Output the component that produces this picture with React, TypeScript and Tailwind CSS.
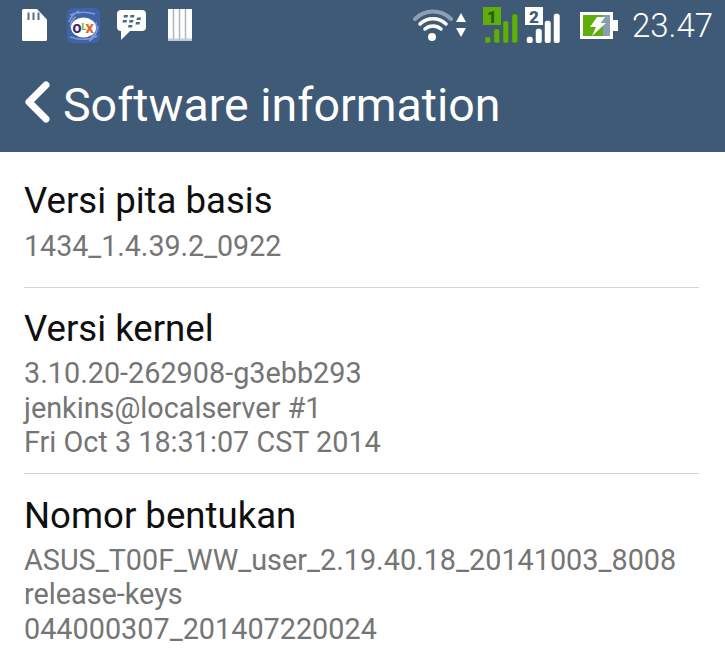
const rows = [
  { title: 'Versi pita basis', lines: ['1434_1.4.39.2_0922'] },
  { title: 'Versi kernel', lines: ['3.10.20-262908-g3ebb293', 'jenkins@localserver #1', 'Fri Oct 3 18:31:07 CST 2014'] },
  { title: 'Nomor bentukan', lines: ['ASUS_T00F_WW_user_2.19.40.18_20141003_8008', 'release-keys', '044000307_201407220024'] },
];

const rowSpacing = ['pt-[26px] pb-[24px]', 'border-t pt-[18px] pb-[13px]', 'border-t pt-[19px]'];

function SdIcon() {
  return (
    <svg width="25" height="32" viewBox="0 0 25 32">
      <path d="M1.500 0H15L25 10.500V30.500Q25 32 23.500 32H1.500Q0 32 0 30.500V1.500Q0 0 1.500 0Z" fill="#fff" />
      <path d="M5.500 3.500H7.500V11H5.500ZM10.500 3.500H12.500V11H10.500ZM15.500 3.500H17.500V11H15.500Z" fill="#54708c" />
    </svg>
  );
}

function OlxIcon() {
  return (
    <svg width="33" height="35" viewBox="0 0 33 35">
      <rect width="33" height="35" rx="6" fill="#3f63ab" />
      <path d="M3 7Q14 2 28 6M3 29Q18 34 30 28M2 14Q5 6 12 3M22 33Q30 28 31 18M4 20Q3 12 9 9M24 29Q30 24 29 14" stroke="#7f9ad2" strokeWidth="1.500" fill="none" />
      <ellipse cx="16.500" cy="19.500" rx="12.500" ry="10" fill="#fff" />
      <text x="5.500" y="24.500" fontFamily="Roboto" fontWeight="900" fontSize="13" fill="#3b2a7a">O</text>
      <text x="14.500" y="22" fontFamily="Roboto" fontWeight="900" fontSize="9" fill="#86b030">L</text>
      <text x="18.500" y="24.500" fontFamily="Roboto" fontWeight="900" fontSize="13" fill="#e4652c">X</text>
    </svg>
  );
}

function BbmIcon() {
  return (
    <svg width="29" height="30" viewBox="0 0 29 30">
      <path d="M4 0H25Q29 0 29 4V17Q29 21 25 21H13L4 30V21Q0 21 0 17V4Q0 0 4 0Z" fill="#fff" />
      <path d="M7 5H11L10.500 7.500H6.500ZM13.500 5H17.500L17 7.500H13ZM6 10H10L9.500 12.500H5.500ZM12.500 10H16.500L16 12.500H12ZM20 7.500H24L23.500 10H19.500ZM19 12H23L22.500 14.500H18.500ZM11.500 15H15.500L15 17.500H11Z" fill="#4c6886" />
    </svg>
  );
}

function BarsIcon() {
  return (
    <svg width="24" height="32" viewBox="0 0 24 32">
      <rect width="24" height="32" fill="#fff" />
      <path d="M5.500 0V30M11.500 0V30M17.500 0V30" stroke="#a8b5c2" strokeWidth="1.500" />
      <rect y="29.500" width="24" height="2.500" fill="#c3ccd6" />
    </svg>
  );
}

function WifiIcon() {
  return (
    <svg width="40" height="33" viewBox="0 0 40 33" fill="none" strokeLinecap="round">
      <path d="M2 10C12 0 28 0 38 10" stroke="#8e9fb2" strokeWidth="4" />
      <path d="M7 15C14 8 26 8 33 15" stroke="#fff" strokeWidth="3.500" />
      <path d="M12 20C16.500 16 23.500 16 28 20" stroke="#fff" strokeWidth="3.500" />
      <circle cx="19" cy="28" r="4" fill="#fff" />
    </svg>
  );
}

function SignalIcon({ color, sim, boxText, edge }: { color: string; sim: string; boxText: string; edge: string }) {
  return (
    <svg width="35" height="36" viewBox="0 0 35 36">
      <rect x="0" y="0" width="18" height="18" fill={color} />
      <text x="9" y="15.500" textAnchor="middle" fontFamily="Roboto" fontWeight="900" fontSize="17" fill={boxText}>{sim}</text>
      <rect x="2" y="30" width="5.500" height="6" rx="2" fill={color} stroke={edge} strokeWidth="0.500" />
      <rect x="11" y="22" width="5.500" height="14" rx="2" fill={color} stroke={edge} strokeWidth="0.500" />
      <rect x="20" y="14" width="5.500" height="22" rx="2" fill={color} stroke={edge} strokeWidth="0.500" />
      <rect x="29" y="7" width="5.500" height="29" rx="2" fill={color} stroke={edge} strokeWidth="0.500" />
    </svg>
  );
}

function BatteryIcon() {
  return (
    <svg width="38" height="27" viewBox="0 0 38 27">
      <rect width="33" height="27" fill="#fff" />
      <rect x="3" y="3" width="27" height="21" fill="#8b9db0" />
      <rect x="3" y="3" width="20" height="21" fill="#5fae0b" />
      <rect x="33" y="8" width="5" height="11" fill="#fff" />
      <path d="M17 5H25L21 11H26L12 24L16 15H10Z" fill="#fff" />
    </svg>
  );
}

export default function App() {
  return (
    <div className="w-[725px] h-[656px] overflow-hidden bg-white font-['Roboto',sans-serif]">
      <header className="h-[152px] bg-[#3f5a76] text-white">
        <div className="h-[50px] pl-[22px] pr-[12px] flex items-center justify-between">
          <div className="flex items-center">
            <SdIcon />
            <div className="ml-[20px]"><OlxIcon /></div>
            <div className="ml-[17px]"><BbmIcon /></div>
            <div className="ml-[22px]"><BarsIcon /></div>
          </div>
          <div className="flex items-center">
            <WifiIcon />
            <div className="ml-[3px] flex flex-col gap-[6px]">
              <div className="w-0 h-0 border-x-[5px] border-x-transparent border-b-[9px] border-b-white" />
              <div className="w-0 h-0 border-x-[5px] border-x-transparent border-t-[9px] border-t-white" />
            </div>
            <div className="ml-[17px]"><SignalIcon color="#5fae0b" sim="1" boxText="#2e5a10" edge="#3f7a1a" /></div>
            <div className="ml-[7px]"><SignalIcon color="#fff" sim="2" boxText="#3f5a76" edge="#fff" /></div>
            <div className="ml-[20px]"><BatteryIcon /></div>
            <span className="ml-[14px] text-[33px] font-light leading-none">23.47</span>
          </div>
        </div>
        <div className="h-[102px] pl-[25px] pt-[8px] flex items-center gap-[13px]">
          <svg className="mb-[6px]" width="25" height="42" viewBox="0 0 25 42" fill="none">
            <path d="M21 4L4 21L21 38" stroke="#fff" strokeWidth="7" strokeLinecap="round" strokeLinejoin="round" />
          </svg>
          <h1 className="text-[46.5px] leading-none font-normal">Software information</h1>
        </div>
      </header>
      <main className="pl-[24px] pr-[26px]">
        {rows.map((row, i) => (
          <section key={row.title} className={`border-[#d4d4d4] ${rowSpacing[i]}`}>
            <h2 className={`text-[36.6px] leading-[46px] text-[#0f0f0f] ${i === 0 ? 'mb-[5px]' : 'mb-[4px]'}`}>{row.title}</h2>
            {row.lines.map((line) => (
              <p key={line} className={`text-[#757575] whitespace-nowrap ${i === 0 ? 'text-[28.6px] leading-[34px]' : 'text-[28.8px] leading-[34.5px]'}`}>{line}</p>
            ))}
          </section>
        ))}
      </main>
    </div>
  );
}
